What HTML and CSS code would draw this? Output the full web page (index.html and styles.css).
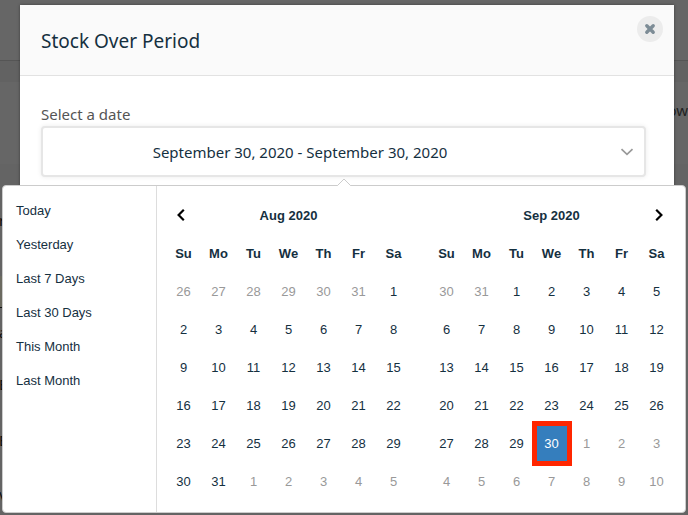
FILE: index.html
```html
<!DOCTYPE html>
<html lang="en">
<head>
    <meta charset="UTF-8">
    <meta name="viewport" content="width=device-width, initial-scale=1.0">
    <title>Stock Over Period</title>
    <link rel="stylesheet" href="styles.css">
</head>
<body>
    <div class="page" aria-hidden="true">
        <div class="page-top"></div>
        <div class="page-strip"></div>
        <div class="page-tools">ow</div>
        <div class="page-list">
            <div class="page-row page-row-tall">r</div>
            <div class="page-row page-row-photo"></div>
            <div class="page-row page-row-short">a</div>
            <div class="page-row">E</div>
            <div class="page-row">E</div>
            <div class="page-row">V</div>
        </div>
    </div>

    <div class="backdrop">
        <div class="modal" role="dialog" aria-labelledby="modal-title">
            <div class="modal-header">
                <h1 id="modal-title">Stock Over Period</h1>
                <button class="close" type="button" aria-label="Close">
                    <svg width="12" height="12" viewBox="0 0 12 12"><path d="M2.8 2.8l6.4 6.4M9.2 2.8L2.8 9.2" stroke="#7d8c96" stroke-width="3.4" stroke-linecap="round"/></svg>
                </button>
            </div>
            <div class="modal-body">
                <label for="period">Select a date</label>
                <div class="field">
                    <input type="text" id="period" value="September 30, 2020 - September 30, 2020" readonly>
                    <svg class="field-arrow" width="14" height="8" viewBox="0 0 14 8"><path d="M1.5 1.2L7 6.4l5.5-5.2" fill="none" stroke="#999" stroke-width="1.7"/></svg>
                </div>
            </div>
        </div>
    </div>

    <div class="picker">
        <svg class="picker-arrow" width="14" height="8" viewBox="0 0 14 8"><path d="M0 8L7 1l7 7z" fill="#fff"/><path d="M0 7.5h.5L7 1l6.5 6.5h.5" fill="none" stroke="#ccc"/></svg>
        <ul class="ranges">
            <li><button type="button">Today</button></li>
            <li><button type="button">Yesterday</button></li>
            <li><button type="button">Last 7 Days</button></li>
            <li><button type="button">Last 30 Days</button></li>
            <li><button type="button">This Month</button></li>
            <li><button type="button">Last Month</button></li>
        </ul>
        <div class="calendars">
            <table class="calendar">
                <thead>
                    <tr>
                        <th><button class="prev" type="button" aria-label="Previous month"><svg width="10" height="14" viewBox="0 0 10 14"><path d="M7.8 1.8L2.6 7l5.2 5.2" fill="none" stroke="#000" stroke-width="2.2"/></svg></button></th>
                        <th colspan="5">Aug 2020</th>
                        <th></th>
                    </tr>
                    <tr><th>Su</th><th>Mo</th><th>Tu</th><th>We</th><th>Th</th><th>Fr</th><th>Sa</th></tr>
                </thead>
                <tbody id="left"></tbody>
            </table>
            <table class="calendar">
                <thead>
                    <tr>
                        <th></th>
                        <th colspan="5">Sep 2020</th>
                        <th><button class="next" type="button" aria-label="Next month"><svg width="10" height="14" viewBox="0 0 10 14"><path d="M2.2 1.8L7.4 7l-5.2 5.2" fill="none" stroke="#000" stroke-width="2.2"/></svg></button></th>
                    </tr>
                    <tr><th>Su</th><th>Mo</th><th>Tu</th><th>We</th><th>Th</th><th>Fr</th><th>Sa</th></tr>
                </thead>
                <tbody id="right"></tbody>
            </table>
        </div>
    </div>

    <script>
        // month is zero based, selected is a day of that month
        function renderMonth(id, year, month, selected) {
            const body = document.getElementById(id);
            const offset = new Date(year, month, 1).getDay();
            // always show six weeks
            for (let week = 0; week < 6; week++) {
                const row = body.insertRow();
                for (let day = 0; day < 7; day++) {
                    const date = new Date(year, month, 1 - offset + week * 7 + day);
                    const button = document.createElement('button');
                    button.type = 'button';
                    button.textContent = date.getDate();
                    if (date.getMonth() !== month) {
                        button.className = 'off';
                    } else if (date.getDate() === selected) {
                        button.className = 'active';
                    }
                    row.insertCell().appendChild(button);
                }
            }
        }

        renderMonth('left', 2020, 7);
        renderMonth('right', 2020, 8, 30);
    </script>
</body>
</html>
```

FILE: styles.css
```css
* {
    box-sizing: border-box;
}
body {
    margin: 0;
    min-height: 100vh;
    overflow: hidden;
    position: relative;
    background: #646464;
    color: #15303f;
    font-family: "Noto Sans", sans-serif;
}
button {
    padding: 0;
    border: 0;
    background: none;
    color: inherit;
    font: inherit;
    cursor: pointer;
}
.page {
    position: absolute;
    inset: 0;
    overflow: hidden;
    color: #222;
    font-size: 15px;
}
.page-top {
    height: 61px;
    background: #666;
    border-bottom: 1px solid #555;
}
.page-strip {
    height: 21px;
    background: #626262;
}
.page-tools {
    display: flex;
    align-items: center;
    justify-content: flex-end;
    height: 82px;
    padding-bottom: 26px;
    background: #666;
}
.page-list {
    margin-left: -1px;
}
.page-row {
    display: flex;
    align-items: center;
    height: 56px;
    color: #111;
}
.page-row-tall {
    height: 112px;
}
.page-row-photo {
    height: 32px;
    width: 10px;
    background: #6b6a60;
    border-bottom: 1px solid #111;
}
.page-row-short {
    height: 48px;
}
.backdrop {
    position: relative;
    padding: 5px 14px 0 20px;
}
.modal {
    height: 240px;
    background: #fff;
    box-shadow: 0 0 3px rgba(0, 0, 0, 0.4);
}
.modal-header {
    display: flex;
    justify-content: space-between;
    height: 71px;
    padding: 11px 11px 0 21px;
    background: #fafafa;
    border-bottom: 1px solid #e2e2e2;
}
.modal-header h1 {
    margin: 11px 0 0;
    font-size: 19px;
    font-weight: 400;
    line-height: 28px;
}
.close {
    display: flex;
    align-items: center;
    justify-content: center;
    width: 26px;
    height: 26px;
    border-radius: 50%;
    background: #ececec;
}
.modal-body {
    padding: 26px 28px 0 21px;
}
.modal-body label {
    display: block;
    color: #555;
    font-size: 15px;
    line-height: 24px;
}
.field {
    display: flex;
    align-items: center;
    height: 51px;
    padding-right: 10px;
    border: 2px solid #e6e6e6;
    border-radius: 4px;
    background: #fff;
    box-shadow: 0 0 5px rgba(0, 0, 0, 0.08);
}
.field input {
    flex: 1;
    min-width: 0;
    padding: 0 63px 0 0;
    border: 0;
    outline: 0;
    background: none;
    color: inherit;
    font: inherit;
    font-size: 15px;
    text-align: center;
}
.picker {
    position: absolute;
    top: 185px;
    left: 2px;
    right: 2px;
    display: flex;
    border: 1px solid #ccc;
    border-radius: 4px;
    background: #fff;
    font-family: "Liberation Sans", Arial, sans-serif;
    font-size: 13px;
}
.picker-arrow {
    position: absolute;
    top: -8px;
    left: 50%;
    margin-left: -7px;
}
.ranges {
    width: 153px;
    margin: 0;
    padding: 7px 0;
    list-style: none;
}
.ranges button {
    display: block;
    width: 100%;
    height: 34px;
    padding: 0 13px;
    text-align: left;
}
.calendars {
    display: flex;
    flex: 1;
    justify-content: space-between;
    padding: 10px 11px 12px 9px;
    border-left: 1px solid #ddd;
}
.calendar {
    width: 245px;
    border-collapse: collapse;
    table-layout: fixed;
}
.calendar th,
.calendar td {
    height: 38px;
    padding: 0;
    text-align: center;
}
.calendar td button {
    width: 30px;
    height: 35px;
}
.calendar .off {
    color: #999;
}
.calendar .active {
    background: #357ebd;
    box-shadow: 0 0 0 5px #ff2600;
    color: #fff;
}
.prev,
.next {
    display: flex;
    align-items: center;
    justify-content: center;
    width: 30px;
    height: 30px;
}
.next {
    margin-left: auto;
}
```
